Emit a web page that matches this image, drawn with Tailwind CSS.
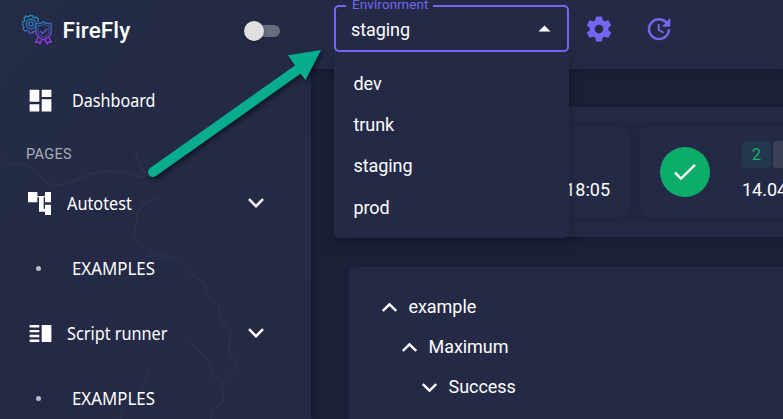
<!DOCTYPE html>
<html lang="en">
<head>
<meta charset="utf-8">
<title>FireFly</title>
<script src="https://cdn.jsdelivr.net/npm/@tailwindcss/browser@4"></script>
</head>
<body class="w-[783px] h-[419px] overflow-hidden bg-[#1b1f38] text-white font-['Roboto',sans-serif]">
<div class="relative flex w-[783px] h-[419px] overflow-hidden">
  <!-- Sidebar -->
  <aside class="relative w-[311px] h-full shrink-0 bg-linear-to-br from-[#232b46] to-[#252945] z-10 shadow-[2px_0_10px_rgba(0,0,0,0.15)]">
    <svg class="absolute inset-0 w-full h-full" viewBox="0 0 311 419" fill="none" stroke="#414267" stroke-opacity=".24" stroke-width="1.8">
      <path d="M5 158q5 10 14 6 10 0 17 6 7 14 20 15 14 0 24-7 16-7 30-7l18 2 12 4 15-4"/>
      <path d="M159 198q-14 2-20 12-5 15-5 27 7 10 25 17M135 152l4 13 6 8"/>
      <path d="M145 257l15-2 18 4 8 10 18 15 4 13 10 7 4 18 8 9-1 20 8 17-15 16 1 18-10 8-3 13M190 342l18 18 6 16 7 6M120 419l4-13 12-5 10-24 4-7"/>
    </svg>
    <div class="relative flex items-center h-[60px] pl-[22px] pr-[31px]">
      <svg class="w-[31px] h-[30px]" viewBox="0 0 31 30" fill="none" stroke="url(#lg)" stroke-width="1.4" stroke-linejoin="round">
        <defs><linearGradient id="lg" gradientUnits="userSpaceOnUse" x1="10" y1="0" x2="14" y2="29"><stop stop-color="#1a94bd"/><stop offset=".5" stop-color="#3d62b8"/><stop offset="1" stop-color="#a030e8"/></linearGradient></defs>
        <path d="M13 16.4l-2 .1-.5 1.5H7.300L6.800 16l-2-.7-1.800.9-2-2.300.9-1.800L1 10.400l-.7-.6V7.200L2.200 6.500l.7-2L2 3l2-2 1.900.9 1.300-.5L7.900.6h2.700L11 2l1.900.8L14.400 2l2 2-.6 1.600.7 1.300"/>
        <circle cx="9" cy="9" r="4.700"/><circle cx="9" cy="9" r="2.100"/>
        <path d="M21.500 6.600l2.500 1.700 5 .1.200 8.400c0 3.500-3 6-7.700 8-4.700-2-7.700-4.500-7.700-8l.1-8.400 5-.1z"/>
        <path d="M21.500 9.200l2 1.200 3.400.2v5.700c0 2.700-2 4.300-5.400 5.900-3.400-1.600-5.400-3.200-5.400-5.900v-5.700l3.400-.2z" stroke-width=".8"/>
        <path d="M18.200 16l2.400 2.600 4.800-5M16 22.500l-2.300 4.800 2.700-.4 1.500 2 2-4.500M27 22.500l2.300 4.800-2.700-.4-1.500 2-2-4.500"/>
      </svg>
      <span class="ml-[9.500px] text-[22.500px] leading-[60px] font-medium tracking-[.1px]">FireFly</span>
      <span class="relative ml-auto w-[36px] h-[20px] flex items-center justify-end top-[1px]"><span class="w-[30px] h-[12px] rounded-full bg-[#686d80]"></span><span class="absolute left-0 top-0 size-[20px] rounded-full bg-[#e0e0e0] shadow-[0_1px_3px_rgba(0,0,0,.3)]"></span></span>
    </div>
    <nav class="relative font-['Noto_Sans','Open_Sans',sans-serif] text-[18px] whitespace-nowrap">
      <div class="flex items-center h-[80px] pl-[25.500px]">
        <svg class="size-[29px]" viewBox="0 0 24 24" fill="#fff"><path d="M3 13h8V3H3zm0 8h8v-6H3zm10 0h8V11h-8zm0-18v6h8V3z"/></svg>
        <svg class="ml-[17.500px] w-[84px] h-[28px] overflow-visible" fill="#fff"><text x="0" y="20.500" textLength="83.500" lengthAdjust="spacingAndGlyphs">Dashboard</text></svg>
      </div>
      <div class="h-[28px] pl-[26px] leading-[29px] text-[14.500px] tracking-[.35px] text-[#a9adb9] font-['Roboto',sans-serif]">PAGES</div>
      <div class="flex items-center h-[70px] pl-[28px] pr-[47px]">
        <svg class="w-[23px] h-[23px]" viewBox="84 184 69 69" fill="#fff"><path d="M84 184h28v12h23v-12h18v31h-18v-15h-4v34h4v-12h18v31h-18v-10h-18v-43h-5v15H84z"/></svg>
        <svg class="ml-[16px] w-[66px] h-[28px] overflow-visible" fill="#fff"><text x="0" y="21" textLength="65" lengthAdjust="spacingAndGlyphs">Autotest</text></svg>
        <svg class="ml-auto w-[16px] h-[10px]" viewBox="0 0 16 10" fill="none" stroke="#fff" stroke-width="2.500"><path d="M1 1.200l7 7 7-7"/></svg>
      </div>
      <div class="flex items-center h-[60px] pl-[36px]">
        <span class="size-[5px] rounded-full bg-[#b9bcc7]"></span>
        <svg class="ml-[30.500px] w-[84px] h-[28px] overflow-visible" fill="#fff"><text x="0" y="21" textLength="83" lengthAdjust="spacingAndGlyphs">EXAMPLES</text></svg>
      </div>
      <div class="flex items-center h-[70px] pl-[25.500px] pr-[47px]">
        <svg class="size-[29px]" viewBox="0 0 24 24" fill="#fff"><path d="M3 15h8v-2H3zm0 4h8v-2H3zm0-8h8V9H3zm0-6v2h8V5zm10 0h8v14h-8z"/></svg>
        <svg class="ml-[12.500px] w-[102px] h-[28px] overflow-visible" fill="#fff"><text x="0" y="21" textLength="100.500" lengthAdjust="spacingAndGlyphs">Script runner</text></svg>
        <svg class="ml-auto w-[16px] h-[10px]" viewBox="0 0 16 10" fill="none" stroke="#fff" stroke-width="2.500"><path d="M1 1.200l7 7 7-7"/></svg>
      </div>
      <div class="flex items-center h-[60px] pl-[36px]">
        <span class="size-[5px] rounded-full bg-[#b9bcc7]"></span>
        <svg class="ml-[30.500px] w-[84px] h-[28px] overflow-visible" fill="#fff"><text x="0" y="21" textLength="83" lengthAdjust="spacingAndGlyphs">EXAMPLES</text></svg>
      </div>
    </nav>
  </aside>

  <!-- Main column -->
  <main class="flex flex-col w-[472px] h-full">
    <header class="relative z-20 h-[69px] shrink-0 bg-[#242a45] flex items-start pl-[23px] shadow-[0_2px_6px_rgba(0,0,0,.15)]">
      <div class="relative mt-[5px] w-[235px] h-[47px] rounded-[5px] border-2 border-[#7367f0] flex items-center justify-between pl-[15px] pr-[16px] text-[18px] z-20">
        <span class="absolute left-[10px] top-[-11px] h-[16px] w-[87px] pl-[6px] bg-[#242a45] text-[#7367f0] text-[13.500px] leading-[16px] tracking-[.1px]">Environment</span>
        <span class="leading-[24px] relative top-[1px] tracking-[-.08px]">staging</span>
        <svg class="w-[13px] h-[7px] relative top-[-.5px]" viewBox="0 0 13 7"><path d="M6.500.5l6 6h-12z" fill="#fff"/></svg>
      </div>
      <!-- Open list -->
      <ul class="absolute left-[23px] top-[51px] w-[235px] h-[187px] pt-[12px] pl-[19.500px] rounded-b-[5px] bg-[#242a45] shadow-[0_4px_14px_rgba(0,0,0,.25)] text-[18px] leading-[41.200px] tracking-[-.08px] z-10">
        <li>dev</li><li>trunk</li><li class="relative -top-[.6px]">staging</li><li>prod</li>
      </ul>
      <svg class="ml-[14.500px] mt-[14px] size-[30px]" viewBox="0 0 24 24" fill="#7367f0"><path d="M12 15.500A3.500 3.500 0 0 1 8.500 12 3.500 3.500 0 0 1 12 8.500a3.500 3.500 0 0 1 3.500 3.500 3.500 3.500 0 0 1-3.500 3.500m7.430-2.530c.04-.32.07-.64.07-.97s-.03-.66-.07-1l2.110-1.630c.19-.15.24-.42.12-.64l-2-3.460c-.12-.22-.39-.31-.61-.22l-2.490 1c-.52-.39-1.060-.73-1.690-.98l-.37-2.650A.506.506 0 0 0 14 2h-4c-.25 0-.46.18-.5.420l-.37 2.650c-.63.25-1.170.59-1.690.98l-2.490-1c-.22-.09-.49 0-.61.220l-2 3.460c-.13.220-.07.490.12.640L4.570 11c-.04.340-.07.670-.07 1s.03.650.07.970l-2.110 1.660c-.19.150-.25.420-.12.640l2 3.460c.12.220.39.300.61.220l2.490-1.010c.52.400 1.060.740 1.690.990l.37 2.650c.04.240.25.420.5.420h4c.25 0 .46-.18.5-.42l.37-2.650c.63-.26 1.170-.59 1.690-.99l2.490 1.010c.22.080.49 0 .61-.22l2-3.460c.12-.22.07-.49-.12-.64z"/></svg>
      <svg class="ml-[30px] mt-[14px] size-[30px]" viewBox="0 0 24 24" fill="#7367f0"><path d="M21 10.120h-6.780l2.740-2.820c-2.730-2.700-7.150-2.800-9.880-.1-2.730 2.710-2.730 7.080 0 9.790s7.150 2.710 9.880 0C18.320 15.650 19 14.080 19 12.100h2c0 1.980-.88 4.550-2.640 6.290-3.510 3.480-9.210 3.480-12.720 0-3.500-3.470-3.530-9.110-.02-12.580s9.140-3.470 12.650 0L21 3zM12.500 8v4.250l3.500 2.080-.72 1.210L11 13V8z"/></svg>
    </header>

    <!-- Recent runs -->
    <section class="mt-[38px] ml-[38px] h-[130px] shrink-0 bg-[#242a45] overflow-hidden pt-[15px] shadow-[0_2px_5px_rgba(0,0,0,.2)]">
      <div class="flex gap-[10px] h-[100px] py-[5px] bg-[#222842]">
        <div class="w-[281px] h-[90px] shrink-0 rounded-[8px] bg-[#242a45] shadow-[0_0_8px_rgba(0,0,0,.1)] flex items-end justify-end pr-[20px] pb-[14px] text-[18px] leading-[26px]">14.04 18:05</div>
        <div class="w-[281px] h-[90px] shrink-0 rounded-[8px] bg-[#242a45] shadow-[0_0_8px_rgba(0,0,0,.1)] flex pl-[20px]">
          <div class="mt-[20px] size-[50px] shrink-0 rounded-full bg-[#0cad6b] flex items-center justify-center">
            <svg class="w-[22px] h-[18px]" viewBox="0 0 22 18" fill="none" stroke="#fff" stroke-width="2.400"><path d="M1 9.700l6 5.800L21 1.800"/></svg>
          </div>
          <div class="ml-[32px] pt-[14px]">
            <div class="flex gap-[2px]">
              <span class="w-[29px] h-[27px] rounded-[4px] bg-[#23384c] text-[#17b275] text-[16px] leading-[28px] text-center">2</span>
              <span class="w-[29px] h-[27px] rounded-[4px] bg-[#3c4058]"></span>
            </div>
            <div class="mt-[9px] text-[18px] leading-[26px] whitespace-nowrap">14.04 18:05</div>
          </div>
        </div>
      </div>
    </section>

    <!-- Result tree -->
    <section class="mt-[30px] ml-[38px] flex-1 rounded-tl-[8px] bg-[#242a45] pt-[20px] text-[18px] leading-[40px] tracking-[-.05px]">
      <div class="flex items-center pl-[32.500px] gap-[12px]"><svg class="w-[15px] h-[9px]" viewBox="0 0 15 9" fill="none" stroke="#fff" stroke-width="2.400"><path d="M.8 8l6.700-6.700L14.200 8"/></svg><span>example</span></div>
      <div class="flex items-center pl-[52.500px] gap-[12px]"><svg class="w-[15px] h-[9px]" viewBox="0 0 15 9" fill="none" stroke="#fff" stroke-width="2.400"><path d="M.8 8l6.700-6.700L14.200 8"/></svg><span>Maximum</span></div>
      <div class="flex items-center pl-[72.500px] gap-[12px]"><svg class="w-[15px] h-[9px]" viewBox="0 0 15 9" fill="none" stroke="#fff" stroke-width="2.400"><path d="M.8 1l6.700 6.700L14.200 1"/></svg><span>Success</span></div>
    </section>
  </main>

  <!-- Callout arrow -->
  <svg class="absolute inset-0 z-30 w-full h-full pointer-events-none drop-shadow-[2px_3px_2px_rgba(0,0,0,.45)]" viewBox="0 0 783 419">
    <path d="M153 172L300 68" stroke="#08ad90" stroke-width="10" stroke-linecap="round"/>
    <path d="M321 50L288 55.300l5.500 8 6 9L305.500 80z" fill="#08ad90"/>
  </svg>
</div>
</body>
</html>
